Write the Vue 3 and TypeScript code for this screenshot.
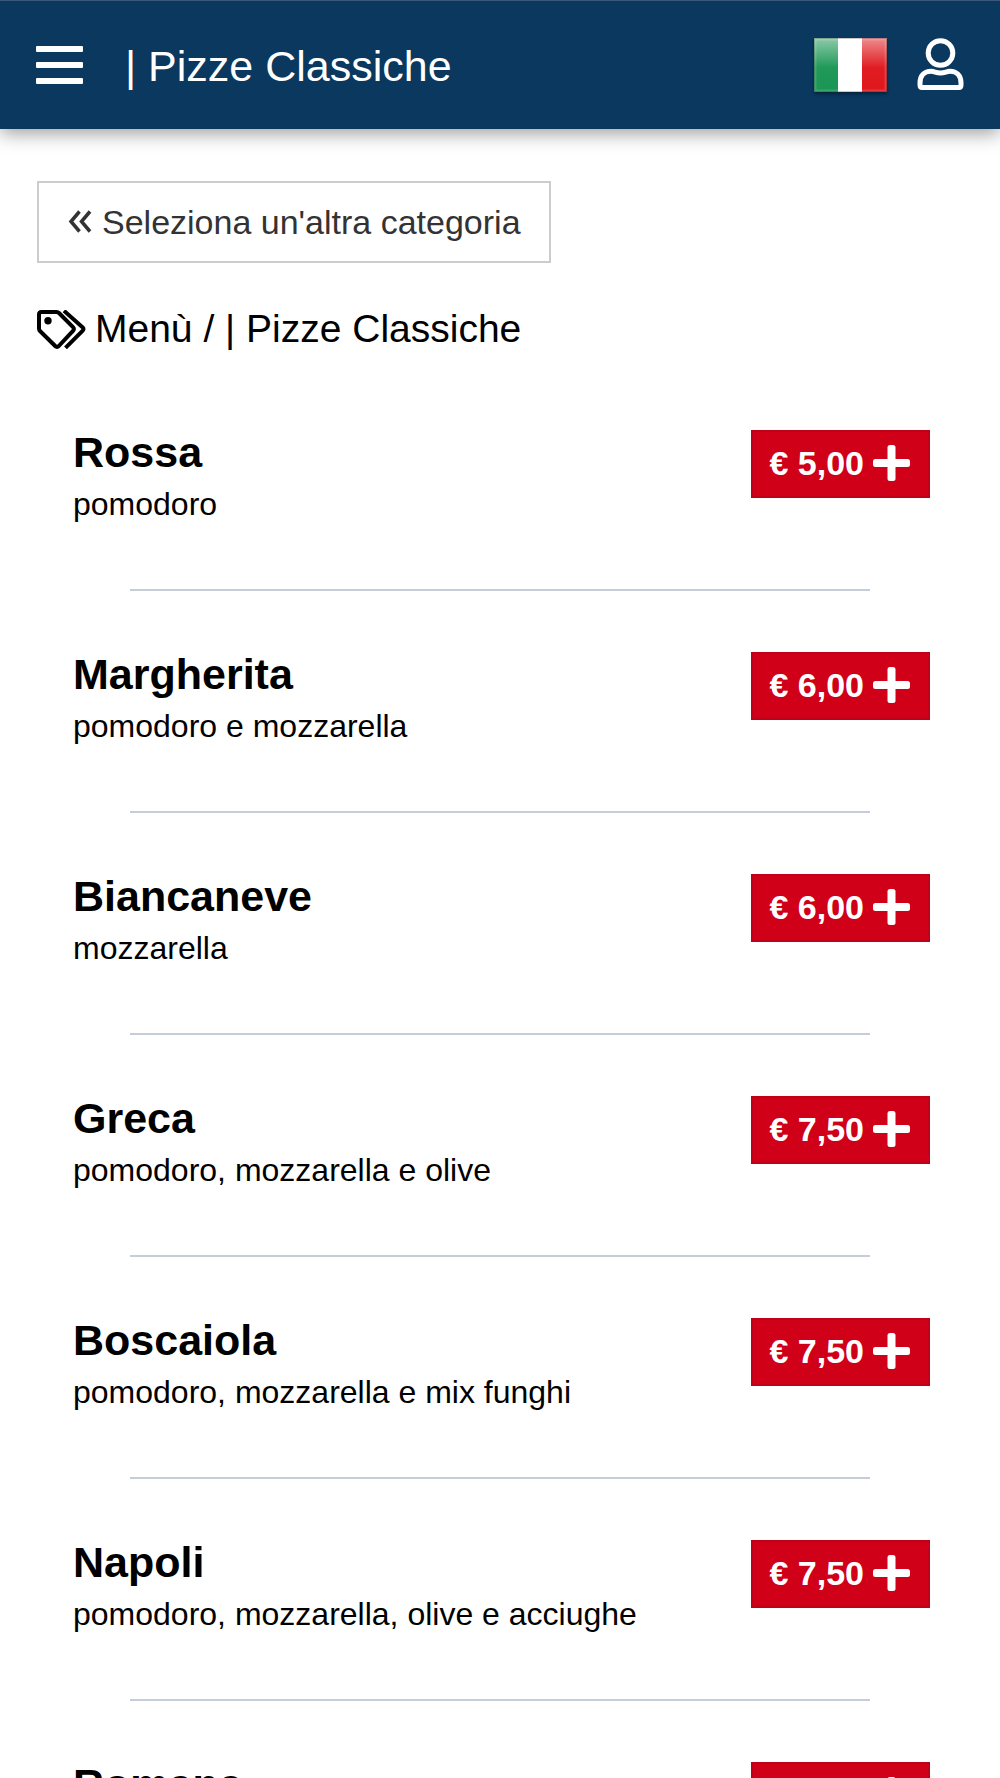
<script setup lang="ts">
interface Pizza {
  name: string
  price: string
  description?: string
}

const category = '| Pizze Classiche'

const pizzas: Pizza[] = [
  { name: 'Rossa', price: '5,00', description: 'pomodoro' },
  { name: 'Margherita', price: '6,00', description: 'pomodoro e mozzarella' },
  { name: 'Biancaneve', price: '6,00', description: 'mozzarella' },
  { name: 'Greca', price: '7,50', description: 'pomodoro, mozzarella e olive' },
  { name: 'Boscaiola', price: '7,50', description: 'pomodoro, mozzarella e mix funghi' },
  { name: 'Napoli', price: '7,50', description: 'pomodoro, mozzarella, olive e acciughe' },
  { name: 'Romana', price: '7,50' },
]
</script>

<template>
  <div class="page">
    <header class="topbar">
      <button class="icon-button" type="button" aria-label="Apri menù">
        <svg width="47" height="40" viewBox="0 0 47 40" fill="#fff">
          <rect width="47" height="6" rx="1" y="1" />
          <rect width="47" height="6" rx="1" y="17" />
          <rect width="47" height="6" rx="1" y="33" />
        </svg>
      </button>
      <h1 class="topbar-title">{{ category }}</h1>
      <button class="icon-button flag" type="button" aria-label="Lingua: italiano">
        <svg width="73" height="54" viewBox="0 0 73 54">
          <defs>
            <linearGradient id="gloss" x1="0" y1="0" x2="0" y2="1">
              <stop offset="0" stop-color="#fff" stop-opacity="0.5" />
              <stop offset="0.55" stop-color="#fff" stop-opacity="0.03" />
              <stop offset="1" stop-color="#fff" stop-opacity="0" />
            </linearGradient>
          </defs>
          <rect width="25" height="54" fill="#1a9654" />
          <rect x="24" width="25" height="54" fill="#fff" />
          <rect x="48" width="25" height="54" fill="#df161c" />
          <rect width="73" height="54" fill="url(#gloss)" />
          <rect x="1" y="1" width="71" height="52" fill="none" stroke="#fff" stroke-opacity="0.15" stroke-width="3" />
          <rect x="0.5" y="0.5" width="72" height="53" fill="none" stroke="#222" stroke-opacity="0.25" />
        </svg>
      </button>
      <button class="icon-button" type="button" aria-label="Profilo">
        <svg width="47" height="53" viewBox="0 0 47 53" fill="none" stroke="#fff" stroke-width="5">
          <circle cx="23.5" cy="15" r="12.3" />
          <path d="M5 49.5H42Q44 49.5 44 47V45C44 37.5 39.500 33.300 33 33.300C29.500 33.300 28 35 23.500 35C19 35 17.500 33.300 14 33.300C7.500 33.300 3 37.500 3 45V47Q3 49.500 5 49.500Z" />
        </svg>
      </button>
    </header>

    <main class="content">
      <button class="back" type="button">
        <svg width="24" height="24" viewBox="0 0 24 24" fill="none" stroke="#333" stroke-width="3.500">
          <path d="M11.500 1.500L3 11.500L11.500 21.500M22 1.500L13.500 11.500L22 21.500" />
        </svg>
        <span>Seleziona un'altra categoria</span>
      </button>

      <h2 class="breadcrumb">
        <svg width="49" height="39" viewBox="0 0 49 39" fill="none" stroke="#000" stroke-width="4" stroke-linejoin="round">
          <path d="M4.500 2H19.500Q21 2 22 3L36 17.200Q37.800 19 36 20.800L21.800 36Q20 37.800 18.200 36L3 21Q2 20 2 18.500V4.500Q2 2 4.500 2Z" />
          <path d="M27 0.800L45.500 17.200Q47.500 19 45.500 20.800L28.500 37.800" />
          <circle cx="11" cy="10.800" r="3.700" fill="#000" stroke="none" />
        </svg>
        <span>Menù / {{ category }}</span>
      </h2>

      <ul class="menu">
        <li v-for="pizza in pizzas" :key="pizza.name" class="entry">
          <div class="row">
            <div class="info">
              <h3 class="name">{{ pizza.name }}</h3>
              <p v-if="pizza.description" class="description">{{ pizza.description }}</p>
            </div>
            <button class="price" type="button">
              <span>€ {{ pizza.price }}</span>
              <svg width="37" height="36" viewBox="0 0 37 36" fill="#fff" aria-hidden="true">
                <rect y="14" width="37" height="8" rx="2.500" />
                <rect x="14.500" width="8" height="36" rx="2.500" />
              </svg>
            </button>
          </div>
          <hr class="divider" />
        </li>
      </ul>
    </main>
  </div>
</template>

<style>
body {
  margin: 0;
  background: #fff;
}
</style>

<style scoped>
.page {
  height: 100vh;
  overflow: hidden;
  font-family: "Liberation Sans", Arial, Helvetica, sans-serif;
  color: #000;
}

svg {
  display: block;
  flex: none;
}

.topbar {
  box-sizing: border-box;
  position: relative;
  display: flex;
  align-items: center;
  height: 129px;
  padding: 0 36px 1px;
  background: #0a385f;
  border-top: 1px solid #38597a;
  box-shadow: 0 4px 18px rgba(0, 0, 0, 0.4);
}

.icon-button {
  padding: 0;
  border: 0;
  background: none;
}

.topbar-title {
  flex: 1;
  margin: 0 0 0 42px;
  padding-top: 2px;
  font-size: 43px;
  line-height: 52px;
  font-weight: 400;
  color: #fff;
}

.flag {
  margin-right: 30px;
  box-shadow: 0 2px 3px rgba(0, 0, 0, 0.4);
}

.content {
  padding: 52px 37px 0;
}

.back {
  box-sizing: border-box;
  display: flex;
  align-items: center;
  gap: 10px;
  height: 82px;
  padding: 0 28px 0 29px;
  border: 2px solid #ccc;
  background: #fff;
  font-family: inherit;
  font-size: 34px;
  line-height: 40px;
  color: #333;
}

.breadcrumb {
  display: flex;
  align-items: center;
  gap: 9px;
  margin: 40px 0 0;
  font-size: 39px;
  line-height: 52px;
  font-weight: 400;
}

.menu {
  margin: 14px 0 0;
  padding: 0;
  list-style: none;
}

.row {
  box-sizing: border-box;
  display: flex;
  align-items: flex-start;
  justify-content: space-between;
  min-height: 220px;
  padding: 57px 33px 0 36px;
}

.name {
  margin: 0;
  font-size: 43px;
  line-height: 52px;
  font-weight: 700;
}

.description {
  margin: 0;
  font-size: 32px;
  line-height: 52px;
}

.price {
  box-sizing: border-box;
  display: flex;
  align-items: center;
  gap: 9px;
  height: 68px;
  margin-top: 4px;
  padding: 0 18px 2px 16px;
  border: 2px solid #bf0018;
  background: #d00019;
  font-family: inherit;
  font-size: 34px;
  line-height: 40px;
  font-weight: 700;
  color: #fff;
}

.divider {
  width: 80%;
  height: 2px;
  margin: 0 auto;
  border: 0;
  background: #c3ced8;
}
</style>
